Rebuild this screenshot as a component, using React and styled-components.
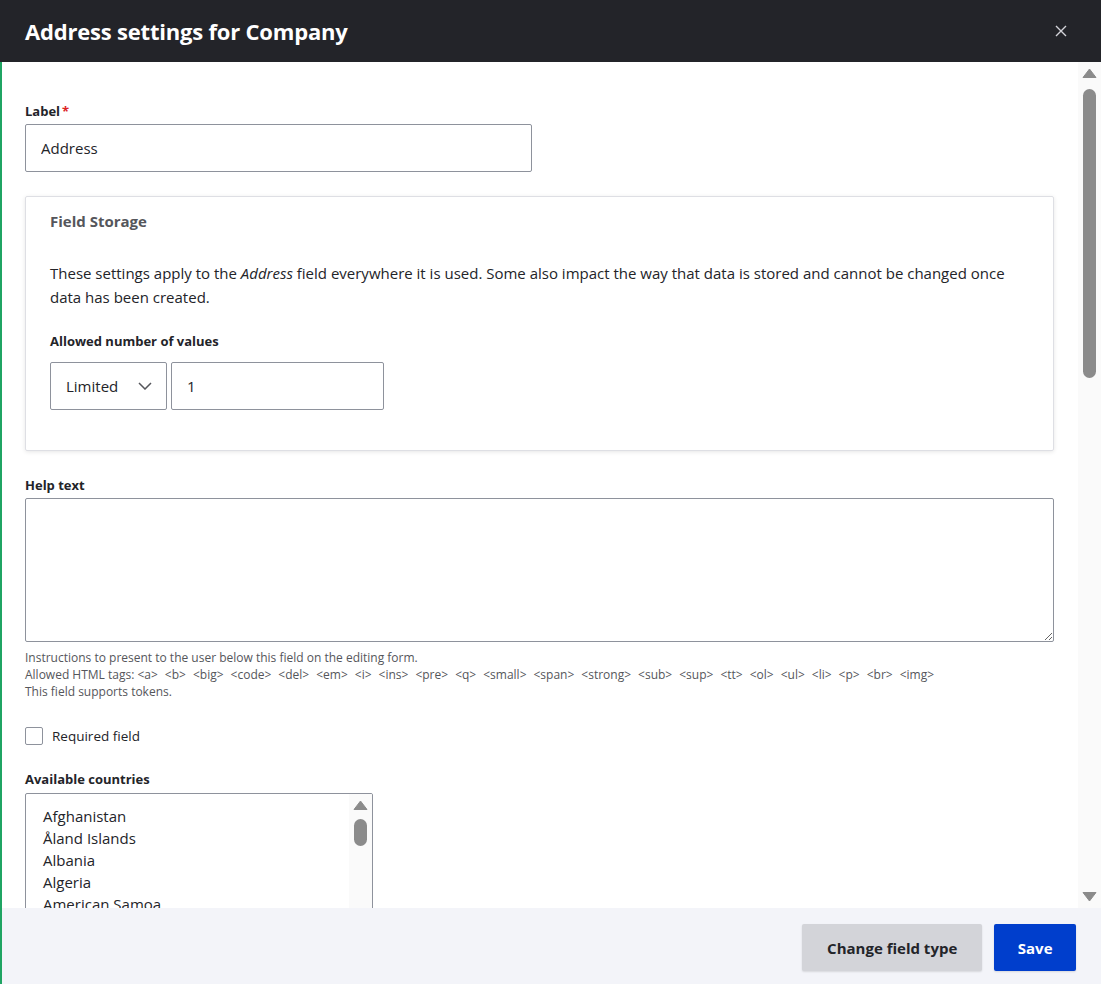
import React from "react";
import styled, { createGlobalStyle } from "styled-components";

const FONT = `"Open Sans", "Noto Sans", "Liberation Sans", sans-serif`;

const GlobalStyle = createGlobalStyle`
  html, body {
    margin: 0;
    padding: 0;
    height: 100%;
  }
  body {
    font-family: ${FONT};
    color: #232429;
    background: #fff;
  }
  * { box-sizing: border-box; }
`;

const countries = [
  "Afghanistan", "Åland Islands", "Albania", "Algeria", "American Samoa", "Andorra",
  "Angola", "Anguilla", "Antarctica", "Antigua & Barbuda", "Argentina", "Armenia",
  "Aruba", "Ascension Island", "Australia", "Austria", "Azerbaijan", "Bahamas",
  "Bahrain", "Bangladesh", "Barbados", "Belarus", "Belgium", "Belize", "Benin",
];

const tags = [
  "a", "b", "big", "code", "del", "em", "i", "ins", "pre", "q", "small", "span",
  "strong", "sub", "sup", "tt", "ol", "ul", "li", "p", "br", "img",
];

const overrides = [
  "Given name", "Additional name", "Family name", "Organization",
  "Address line 1", "Address line 2", "Postal code", "Sorting code",
  "Locality", "Dependent locality", "Administrative area",
];

const Frame = styled.div`
  height: 100vh;
  display: flex;
  flex-direction: column;
  overflow: hidden;
`;

const Header = styled.header`
  flex: 0 0 62px;
  display: flex;
  align-items: center;
  justify-content: space-between;
  padding: 0 28px 0 25px;
  background: #232429;
`;

const Title = styled.h1`
  margin: 0;
  font-size: 22px;
  font-weight: 700;
  color: #fff;
  letter-spacing: -0.2px;
`;

const CloseButton = styled.button`
  width: 24px;
  height: 24px;
  padding: 0;
  border: 0;
  background: none;
  display: flex;
  align-items: center;
  justify-content: center;
  cursor: pointer;
`;

const Main = styled.div`
  flex: 1;
  min-height: 0;
  display: flex;
  flex-direction: column;
  border-left: 2px solid #1fa463;
`;

const BodyRow = styled.div`
  flex: 1;
  min-height: 0;
  display: flex;
`;

const Body = styled.div`
  flex: 1;
  overflow-y: auto;
  scrollbar-width: none;
  padding: 40px 24px 40px 23px;
`;

const Track = styled.div`
  flex: 0 0 23px;
  display: flex;
  flex-direction: column;
  background: #fafafa;
`;

const ArrowCell = styled.div`
  flex: 0 0 23px;
  display: flex;
  align-items: center;
  justify-content: center;
`;

const ThumbArea = styled.div`
  flex: 1;
  display: flex;
  justify-content: center;
  padding-top: ${(p) => p.$top}px;
`;

const Thumb = styled.div`
  width: 13px;
  height: ${(p) => p.$len}px;
  border-radius: 7px;
  background: #8b8b8b;
`;

function Arrow({ down }) {
  return (
    <ArrowCell>
      <svg width="15" height="11" viewBox="0 0 15 11">
        <path
          d={down ? "M1 1.5H14L7.5 10Z" : "M1 9.5H14L7.5 1Z"}
          fill="#8b8b8b"
          stroke="#8b8b8b"
          strokeLinejoin="round"
        />
      </svg>
    </ArrowCell>
  );
}

function ScrollTrack({ top, len }) {
  return (
    <Track>
      <Arrow />
      <ThumbArea $top={top}>
        <Thumb $len={len} />
      </ThumbArea>
      <Arrow down />
    </Track>
  );
}

const Item = styled.div`
  margin-bottom: ${(p) => p.$mb ?? 24}px;
`;

const Label = styled.label`
  display: block;
  font-size: 13px;
  font-weight: 700;
  line-height: 18px;
  margin-bottom: ${(p) => p.$mb ?? 4}px;
  color: #232429;
`;

const Required = styled.span`
  color: #dc2323;
  margin-left: 2px;
`;

const Input = styled.input`
  display: block;
  width: ${(p) => p.$w}px;
  height: 48px;
  padding: 0 15px;
  font-family: ${FONT};
  font-size: 15px;
  color: #232429;
  border: 1px solid #8e929c;
  border-radius: 2px;
  background: #fff;
  outline: none;
`;

const Fieldset = styled.fieldset`
  margin: 0 0 25px;
  padding: 14px 24px 40px;
  border: 1px solid #dedfe4;
  border-radius: 2px;
  box-shadow: 0 1px 4px rgba(0, 0, 0, 0.1);
  min-width: 0;
`;

const Legend = styled.div`
  font-size: 15px;
  font-weight: 700;
  color: #55565b;
  line-height: 20px;
  margin-bottom: 30px;
`;

const Paragraph = styled.p`
  margin: 0 0 23px;
  font-size: 15px;
  line-height: 24px;
  color: #232429;
`;

const Row = styled.div`
  display: flex;
  gap: 4px;
`;

const SelectBox = styled.div`
  width: 117px;
  height: 48px;
  display: flex;
  align-items: center;
  justify-content: space-between;
  padding: 0 14px 0 15px;
  font-size: 15px;
  border: 1px solid #8e929c;
  border-radius: 2px;
  background: #fff;
`;

const TextArea = styled.textarea`
  display: block;
  width: 100%;
  height: 144px;
  padding: 10px 15px;
  font-family: ${FONT};
  font-size: 15px;
  border: 1px solid #8e929c;
  border-radius: 2px;
  resize: vertical;
  outline: none;
`;

const Description = styled.div`
  margin-top: 7px;
  font-size: 12px;
  line-height: 17px;
  color: #55565b;
`;

const TagList = styled.span`
  word-spacing: 3.9px;
`;

const CheckRow = styled.label`
  display: flex;
  align-items: center;
  gap: 9px;
  font-size: 13.5px;
  color: #232429;
`;

const CheckBox = styled.span`
  width: 18px;
  height: 18px;
  border: 1px solid #8e929c;
  border-radius: 2px;
  background: #fff;
`;

const ListBox = styled.div`
  width: 348px;
  height: 250px;
  display: flex;
  border: 1px solid #8e929c;
  border-radius: 2px;
  overflow: hidden;
`;

const Options = styled.div`
  flex: 1;
  overflow-y: auto;
  scrollbar-width: none;
  padding: 11px 0;
`;

const Option = styled.div`
  padding: 0 17px;
  font-size: 15px;
  line-height: 22px;
  white-space: nowrap;
`;

const Table = styled.div`
  border: 1px solid #dedfe4;
  max-width: 640px;
`;

const TableRow = styled.div`
  display: grid;
  grid-template-columns: 1fr 220px;
  align-items: center;
  padding: 12px 16px;
  font-size: 14px;
  border-top: 1px solid #dedfe4;
  &:first-child {
    border-top: 0;
    font-weight: 700;
    background: #f3f4f9;
  }
`;

const Footer = styled.footer`
  flex: 0 0 76px;
  display: flex;
  justify-content: flex-end;
  align-items: flex-start;
  gap: 12px;
  padding: 16px 25px 0;
  background: #f3f4f9;
`;

const Button = styled.button`
  height: 47px;
  padding: 0 ${(p) => (p.$primary ? 23.5 : 25)}px;
  border: 0;
  border-radius: 2px;
  font-family: ${FONT};
  font-size: 15px;
  font-weight: 700;
  color: ${(p) => (p.$primary ? "#fff" : "#232429")};
  background: ${(p) => (p.$primary ? "#003ecc" : "#d3d4d9")};
  box-shadow: 0 1px 2px rgba(0, 0, 0, 0.12);
  cursor: pointer;
`;

export default function App() {
  return (
    <>
      <GlobalStyle />
      <Frame>
        <Header>
          <Title>Address settings for Company</Title>
          <CloseButton aria-label="Close">
            <svg width="12" height="12" viewBox="0 0 12 12">
              <path d="M1 1L11 11M11 1L1 11" stroke="#d3d4d9" strokeWidth="1.4" />
            </svg>
          </CloseButton>
        </Header>

        <Main>
          <BodyRow>
            <Body>
              <Item>
                <Label>
                  Label<Required>*</Required>
                </Label>
                <Input $w={507} defaultValue="Address" />
              </Item>

              <Fieldset>
                <Legend>Field Storage</Legend>
                <Paragraph>
                  These settings apply to the <em>Address</em> field everywhere it is used. Some
                  also impact the way that data is stored and cannot be changed once data has been
                  created.
                </Paragraph>
                <Label $mb={12}>Allowed number of values</Label>
                <Row>
                  <SelectBox>
                    Limited
                    <svg width="14" height="8" viewBox="0 0 14 8">
                      <path d="M1 1L7 7L13 1" fill="none" stroke="#55565b" strokeWidth="1.5" />
                    </svg>
                  </SelectBox>
                  <Input $w={213} defaultValue="1" />
                </Row>
              </Fieldset>

              <Item $mb={27}>
                <Label>Help text</Label>
                <TextArea />
                <Description>
                  Instructions to present to the user below this field on the editing form.
                  <br />
                  Allowed HTML tags: <TagList>{tags.map((t) => `<${t}>`).join(" ")}</TagList>
                  <br />
                  This field supports tokens.
                </Description>
              </Item>

              <Item $mb={25}>
                <CheckRow>
                  <CheckBox />
                  Required field
                </CheckRow>
              </Item>

              <Item>
                <Label $mb={5}>Available countries</Label>
                <ListBox>
                  <Options>
                    {countries.map((c) => (
                      <Option key={c}>{c}</Option>
                    ))}
                  </Options>
                  <ScrollTrack top={2} len={27} />
                </ListBox>
                <Description>
                  If no countries are selected, all countries will be available.
                </Description>
              </Item>

              <Item>
                <Label>Field overrides</Label>
                <Table>
                  <TableRow>
                    <span>Field</span>
                    <span>Override</span>
                  </TableRow>
                  {overrides.map((o) => (
                    <TableRow key={o}>
                      <span>{o}</span>
                      <span>- No override -</span>
                    </TableRow>
                  ))}
                </Table>
              </Item>

              <Item>
                <Label>Default value</Label>
                <Description>
                  The default value for this field, used when creating new content.
                </Description>
              </Item>
            </Body>
            <ScrollTrack top={4} len={289} />
          </BodyRow>

          <Footer>
            <Button>Change field type</Button>
            <Button $primary>Save</Button>
          </Footer>
        </Main>
      </Frame>
    </>
  );
}
